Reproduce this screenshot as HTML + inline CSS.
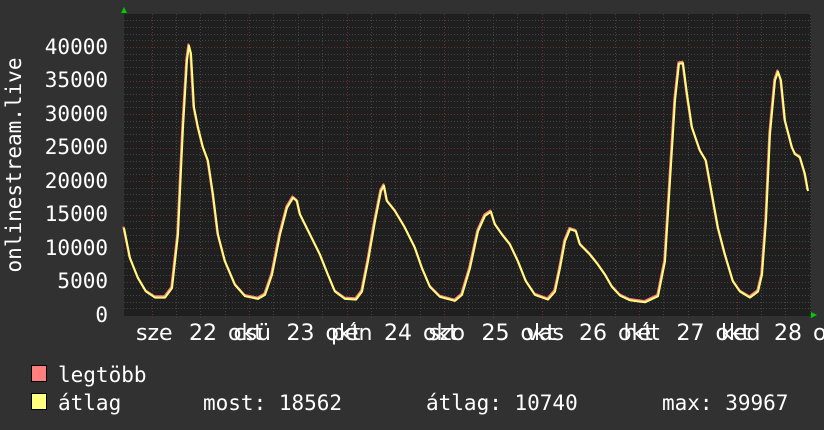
<!DOCTYPE html>
<html><head><meta charset="utf-8"><style>
html,body{margin:0;padding:0;background:#313131;}
svg{display:block}
.m{font-family:"DejaVu Sans Mono","Liberation Mono",monospace;fill:#fff}
.p{font-family:"DejaVu Sans","Liberation Sans",sans-serif;fill:#fff}
</style></head><body>
<svg id="s" width="824" height="430" viewBox="0 0 824 430" xmlns="http://www.w3.org/2000/svg">
<rect width="824" height="430" fill="#313131"/>
<rect x="124" y="14" width="687" height="302" fill="#1f1f1f"/>
<g id="grid"></g>
<path id="pmax" fill="none" stroke="#ff7f7f" stroke-width="2.2" stroke-linejoin="round"/>
<path id="pavg" fill="none" stroke="#ffff7f" stroke-width="2" stroke-linejoin="round"/>
<polygon points="121,13 127,13 124,7" fill="#00cc00"/>
<polygon points="811,312 811,318 817,315" fill="#00cc00"/>
<g class="m" font-size="21" text-anchor="end">
<text x="108" y="54">40000</text><text x="108" y="87">35000</text><text x="108" y="121">30000</text>
<text x="108" y="154">25000</text><text x="108" y="188">20000</text><text x="108" y="221">15000</text>
<text x="108" y="255">10000</text><text x="108" y="288">5000</text><text x="108" y="322">0</text>
</g>
<text class="m" font-size="21" transform="translate(21,165) rotate(-90)" text-anchor="middle">onlinestream.live</text>
<g class="p" font-size="22" id="xl"></g>
<rect x="31.5" y="365.5" width="15" height="16" fill="#ff7f7f" stroke="#000"/>
<rect x="31.5" y="393.5" width="15" height="16" fill="#ffff7f" stroke="#000"/>
<g class="m" font-size="21">
<text x="58" y="382">legtöbb</text>
<text x="58" y="410">átlag</text>
<text x="203" y="410">most: 18562</text>
<text x="426" y="410">átlag: 10740</text>
<text x="662" y="410">max: 39967</text>
</g>
</svg>
<script>
var NS="http://www.w3.org/2000/svg";
var S=0.0067;
var g=document.getElementById('grid');
function ln(x1,y1,x2,y2,c){var l=document.createElementNS(NS,'line');l.setAttribute('x1',x1);l.setAttribute('y1',y1);l.setAttribute('x2',x2);l.setAttribute('y2',y2);l.setAttribute('stroke',c);l.setAttribute('stroke-width','1');l.setAttribute('stroke-dasharray','1,2');g.appendChild(l);}
for(var v=1000;v<=44000;v+=1000){var y=Math.round(315-v*S)+0.5;ln(124,y,810,y,v%5000==0?'#6a3030':'#444');}
for(var k=0;k<30;k++){var x=151.5+k*24.375;if(x>810)break;x=Math.round(x)+0.5;ln(x,14,x,318,(k%4==0)?'#6a3030':'#444');}
var days=["sze","csü","pén","szo","vas","hét","ked"];
var xl=document.getElementById('xl');
function tx(x,s){var t=document.createElementNS(NS,'text');t.setAttribute('x',x);t.setAttribute('y',340);t.textContent=s;xl.appendChild(t);}
for(var i=0;i<7;i++){var c=200+i*97.5;tx(c-64,days[i]);tx(c-11,String(22+i));tx(c+28,"okt");}
var pts=[124,13000,130,8500,138,5500,146,3500,155,2600,165,2600,172,4000,178,12000,183,28000,187,38000,189,40200,191,39000,194,31000,198,28000,203,25000,208,23000,213,18000,218,12000,225,8000,235,4500,245,2800,258,2400,265,3000,272,6000,280,12000,287,16000,293,17500,297,17000,300,15000,310,12000,320,9000,328,6000,335,3500,345,2400,356,2300,362,3500,368,8000,375,14000,381,18500,384,19300,387,17000,395,15500,405,13000,415,10000,422,7000,430,4200,440,2700,455,2100,462,3000,470,7000,478,12500,485,14800,491,15400,495,13500,502,12000,510,10500,518,8000,526,5000,535,3000,548,2300,555,3500,560,7000,565,11000,570,12800,576,12500,580,10500,590,9000,598,7500,605,6000,612,4200,620,2900,630,2200,645,1900,658,2800,665,8000,670,20000,675,32000,679,37500,683,37600,687,33000,692,28000,700,24500,706,23000,712,18000,718,13000,725,9000,733,5000,740,3500,750,2600,758,3500,762,6000,766,14000,770,27000,775,35000,778,36300,781,35000,785,29000,792,25000,795,24000,800,23500,805,21000,808,18500];
function path(dy,dx){var d='';for(var i=0;i<pts.length;i+=2){d+=(i?'L':'M')+(pts[i]+dx)+','+(315-pts[i+1]*S+dy).toFixed(1);}return d;}
document.getElementById('pmax').setAttribute('d',path(-1.2,-0.6));
document.getElementById('pavg').setAttribute('d',path(0,0));
</script>
</body></html>
